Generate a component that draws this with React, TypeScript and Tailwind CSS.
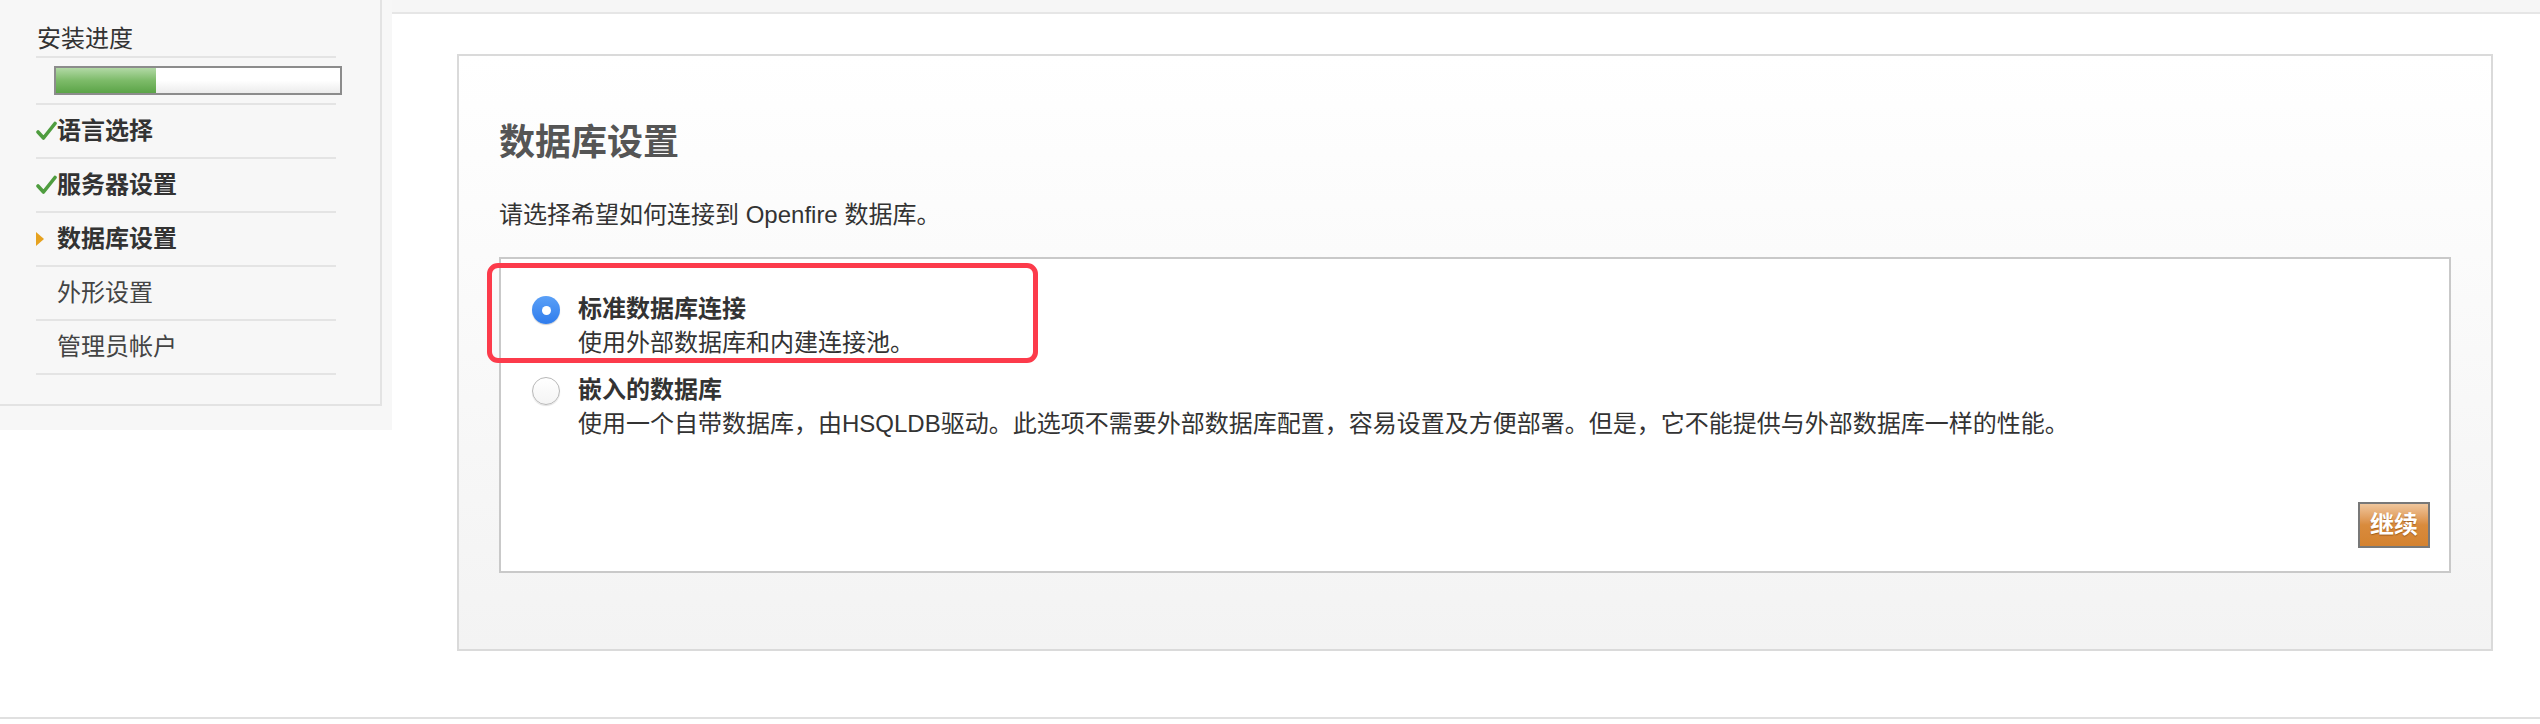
import React from "react";

const FONT = "font-['Liberation_Sans','Noto_Sans_CJK_SC',sans-serif]";

function Check() {
  return (
    <svg width="21" height="20" viewBox="0 0 21 20" className="shrink-0">
      <path d="M2 11 L7.5 17 L19 2.5" fill="none" stroke="#4f9d3f" strokeWidth="3.6" strokeLinecap="round" strokeLinejoin="round" />
    </svg>
  );
}

function Arrow() {
  return (
    <svg width="21" height="16" viewBox="0 0 21 16" className="shrink-0">
      <path d="M0 1 L8 8 L0 15 Z" fill="#e6a21f" />
    </svg>
  );
}

type Step = { label: string; state: "done" | "current" | "todo" };

const steps: Step[] = [
  { label: "语言选择", state: "done" },
  { label: "服务器设置", state: "done" },
  { label: "数据库设置", state: "current" },
  { label: "外形设置", state: "todo" },
  { label: "管理员帐户", state: "todo" },
];

function Sidebar() {
  return (
    <aside className="w-[392px] h-[430px] bg-[#f7f7f7] shrink-0">
      <div className="w-[382px] h-[406px] border-r-2 border-b-2 border-[#e3e3e3] pl-[36px] pr-[44px] pt-[22px]">
        <div className="h-[36px] leading-[34px] text-[24px] text-[#333] border-b-2 border-[#e4e4e4] pl-[1px]">
          安装进度
        </div>
        <div className="h-[47px] border-b-2 border-[#e4e4e4] pt-[8px] pl-[18px]">
          <div className="w-[288px] h-[29px] border-2 border-[#8c8c8c] bg-gradient-to-b from-white via-white to-[#ececec] flex">
            <div className="w-[100px] h-full bg-gradient-to-b from-[#b2d9a5] via-[#7dbb69] to-[#5ba447]" />
          </div>
        </div>
        {steps.map((s) => (
          <div
            key={s.label}
            className={`h-[54px] border-b-2 border-[#e4e4e4] flex items-center text-[24px] ${
              s.state === "todo" ? "text-[#444] font-normal" : "text-[#333] font-bold"
            }`}
          >
            {s.state === "done" ? <Check /> : s.state === "current" ? <Arrow /> : <span className="block w-[21px] shrink-0" />}
            <span className="leading-[34px]">{s.label}</span>
          </div>
        ))}
      </div>
    </aside>
  );
}

function Radio({ checked }: { checked: boolean }) {
  if (checked) {
    return (
      <span className="w-[28px] h-[28px] rounded-full bg-gradient-to-b from-[#5aa0f7] to-[#2f7cec] flex items-center justify-center shrink-0 shadow-[0_1px_1px_rgba(0,0,0,0.2)]">
        <span className="block w-[9px] h-[9px] rounded-full bg-white" />
      </span>
    );
  }
  return (
    <span className="block w-[28px] h-[28px] rounded-full bg-gradient-to-b from-white to-[#f4f4f4] border-[1.5px] border-[#b8b8b8] shrink-0 shadow-[0_1px_1px_rgba(0,0,0,0.12)]" />
  );
}

function Option({ checked, title, desc }: { checked: boolean; title: string; desc: string }) {
  return (
    <div className="flex gap-[18px]">
      <div className="pt-[4px]">
        <Radio checked={checked} />
      </div>
      <div className="flex flex-col">
        <div className="text-[24px] leading-[34px] font-bold text-[#333]">{title}</div>
        <div className="text-[24px] leading-[34px] text-[#333]">{desc}</div>
      </div>
    </div>
  );
}

export default function App() {
  return (
    <div className={`w-[2540px] h-[724px] bg-white flex flex-col ${FONT}`}>
      <div className="flex h-[717px]">
        <Sidebar />
        <main className="flex-1 flex flex-col">
          <div className="h-[14px] bg-[#f6f6f6] border-b-2 border-[#e6e6e6]" />
          <section className="mt-[40px] ml-[65px] mr-[47px] h-[597px] border-2 border-[#dadada] bg-gradient-to-b from-white to-[#f3f3f3] pl-[40px] pr-[40px] pt-[63px] flex flex-col">
            <h1 className="text-[36px] leading-[48px] font-bold text-[#555]">数据库设置</h1>
            <p className="mt-[31px] text-[24px] leading-[34px] text-[#333]">请选择希望如何连接到 Openfire 数据库。</p>
            <div className="relative mt-[25px] h-[316px] border-2 border-[#c9c9c9] bg-white pl-[31px] pt-[33px] pr-[19px] pb-[23px] flex flex-col">
              <div className="absolute left-[-14px] top-[4px] w-[551px] h-[100px] border-[5px] border-[#fc3b4b] rounded-[11px]" />
              <Option checked title="标准数据库连接" desc="使用外部数据库和内建连接池。" />
              <div className="mt-[13px]">
                <Option
                  checked={false}
                  title="嵌入的数据库"
                  desc="使用一个自带数据库，由HSQLDB驱动。此选项不需要外部数据库配置，容易设置及方便部署。但是，它不能提供与外部数据库一样的性能。"
                />
              </div>
              <div className="mt-auto flex justify-end">
                <button className="w-[72px] h-[46px] border-2 border-[#787878] bg-gradient-to-b from-[#efc69c] via-[#d98b3c] to-[#d4822f] text-white text-[24px] font-bold leading-none [text-shadow:0_1px_1px_rgba(120,60,0,0.6)]">
                  继续
                </button>
              </div>
            </div>
          </section>
        </main>
      </div>
      <div className="h-[2px] bg-[#e0e0e0]" />
    </div>
  );
}
